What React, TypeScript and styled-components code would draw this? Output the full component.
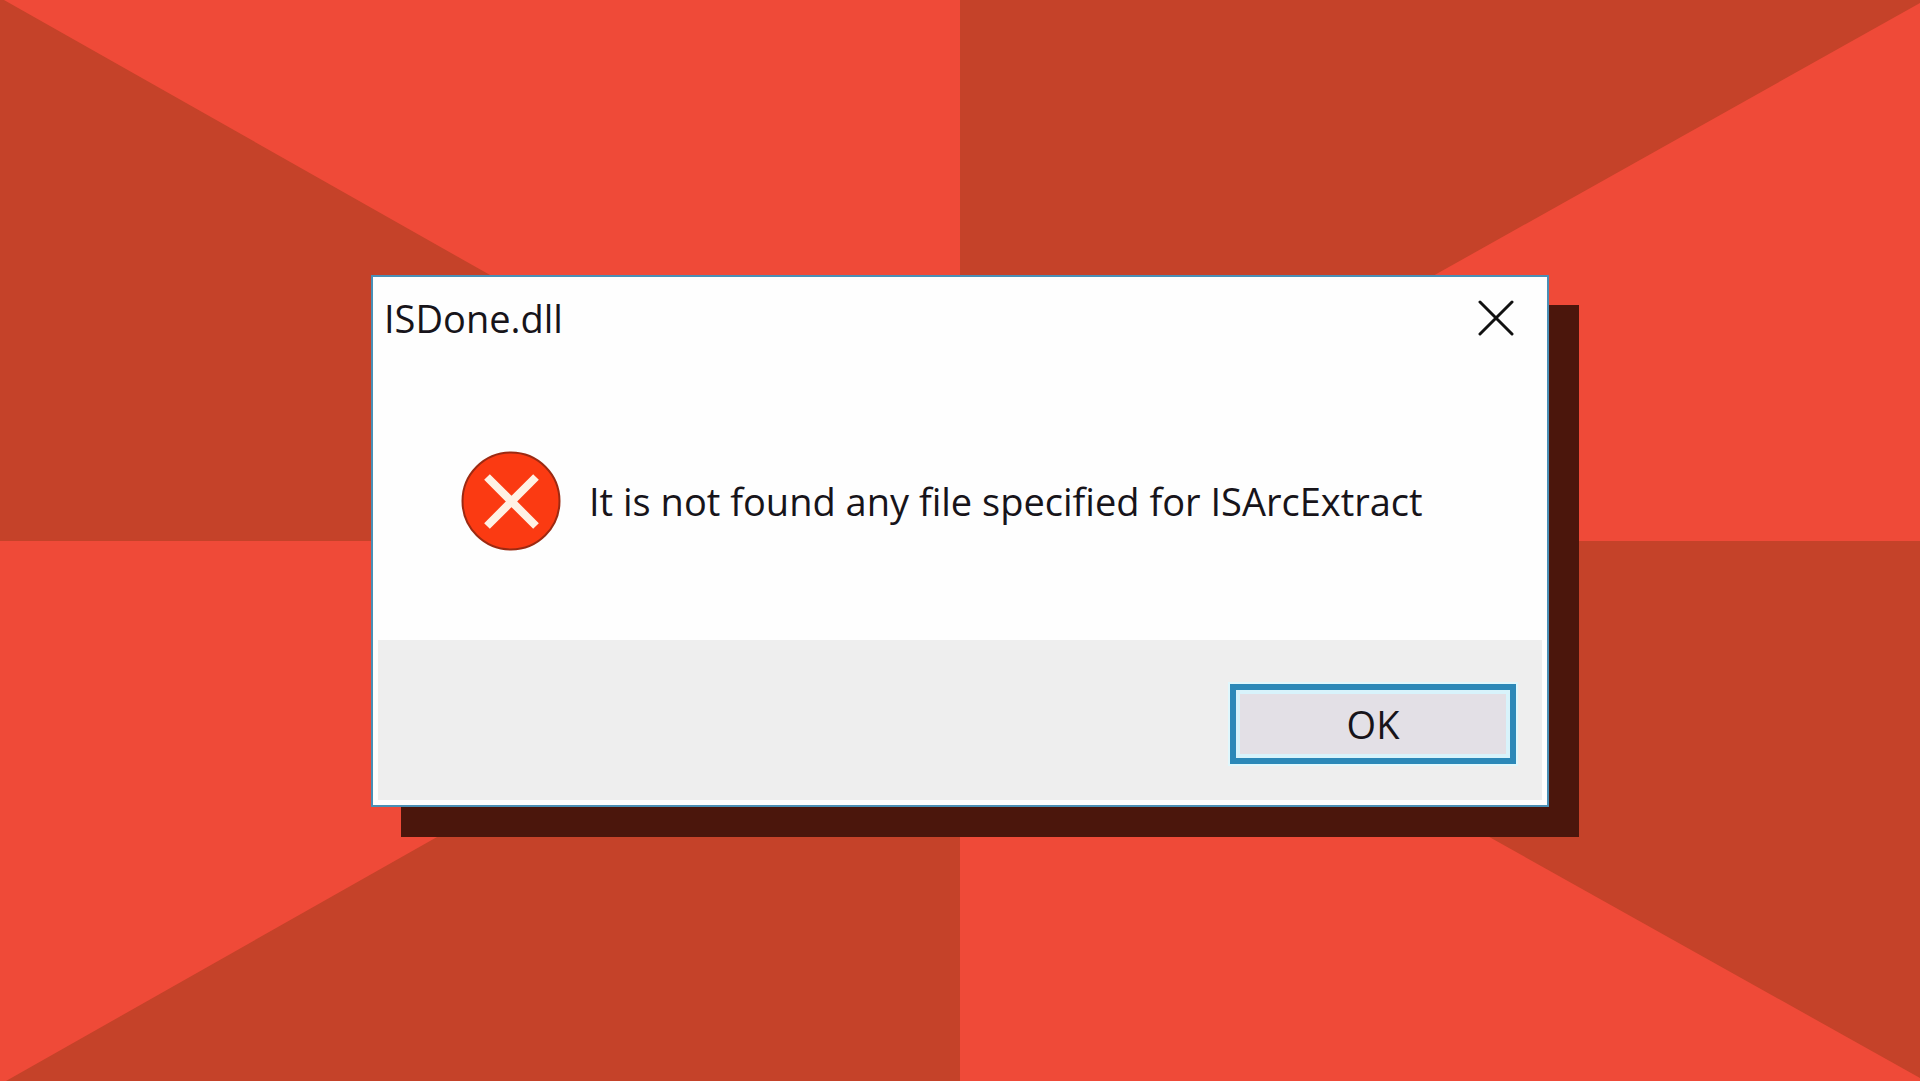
import React, { useState } from 'react';
import styled, { createGlobalStyle } from 'styled-components';

const GlobalStyle = createGlobalStyle`
  *, *::before, *::after { box-sizing: border-box; }
  body { margin: 0; background: #ef4a38; font-family: "Open Sans", "Noto Sans", sans-serif; }
`;

const Desktop = styled.main`
  position: relative;
  display: grid;
  place-items: center;
  min-height: 100vh;
  padding: 40px;
  overflow: hidden;
`;

const Rays = styled.svg`
  position: absolute;
  inset: 0;
  width: 100%;
  height: 100%;
`;

const Dialog = styled.section`
  position: relative;
  display: flex;
  flex-direction: column;
  width: 100%;
  max-width: 1178px;
  border: 2px solid #4a8fb5;
  background: #fefefe;
  color: #17141a;
  box-shadow: 30px 30px 0 #4b160c;
`;

const TitleBar = styled.header`
  display: flex;
  align-items: center;
  justify-content: space-between;
  height: 82px;
  padding: 0 25px 0 11px;
`;

const Title = styled.h1`
  margin: 0;
  font-size: 38px;
  line-height: 48px;
  font-weight: 400;
`;

const CloseButton = styled.button`
  display: grid;
  place-items: center;
  width: 52px;
  height: 52px;
  padding: 0;
  border: 0;
  background: transparent;
  color: #111;
`;

const Body = styled.div`
  display: flex;
  align-items: center;
  gap: 28px;
  padding: 92px 88px 89px;
`;

const ErrorIcon = styled.svg`
  flex: none;
  width: 100px;
  height: 100px;
`;

const Message = styled.p`
  margin: 0;
  font-size: 38px;
  line-height: 48px;
`;

const Footer = styled.footer`
  display: flex;
  justify-content: flex-end;
  margin: 0 5px 5px;
  padding: 44px 26px 36px;
  background: #eeeeee;
`;

const OkButton = styled.button`
  width: 286px;
  height: 80px;
  padding: 0;
  border: 6px solid #2b88b8;
  background: #e3e0e6;
  box-shadow: inset 0 0 0 4px #d8f3fb, 0 0 0 2px #e0f7fc;
  color: inherit;
  font-family: inherit;
  font-size: 38px;
  line-height: 48px;
`;

export default function App() {
  const [open, setOpen] = useState(true);
  const close = () => setOpen(false);

  return (
    <Desktop>
      <GlobalStyle />
      <Rays viewBox="0 0 1920 1081" preserveAspectRatio="none" aria-hidden="true">
        <path
          fill="#c54229"
          d="M960 541V0H1920V3ZM960 541H1920V1078ZM960 541V1081H6ZM960 541H0V0H4Z"
        />
      </Rays>
      {open && (
        <Dialog role="alertdialog" aria-labelledby="title" aria-describedby="message">
          <TitleBar>
            <Title id="title">ISDone.dll</Title>
            <CloseButton type="button" aria-label="Close" onClick={close}>
              <svg width="36" height="36" viewBox="0 0 36 36" aria-hidden="true">
                <path d="M2 2L34 34M34 2L2 34" stroke="currentColor" strokeWidth="3" strokeLinecap="round" />
              </svg>
            </CloseButton>
          </TitleBar>
          <Body>
            <ErrorIcon viewBox="0 0 100 100" aria-hidden="true">
              <circle cx="50" cy="50" r="48.5" fill="#fb3a12" stroke="#9c2a12" strokeWidth="2" />
              <path d="M26 26L75 75M75 26L26 75" stroke="#fff1e4" strokeWidth="8" />
            </ErrorIcon>
            <Message id="message">It is not found any file specified for ISArcExtract</Message>
          </Body>
          <Footer>
            <OkButton type="button" onClick={close}>OK</OkButton>
          </Footer>
        </Dialog>
      )}
    </Desktop>
  );
}
